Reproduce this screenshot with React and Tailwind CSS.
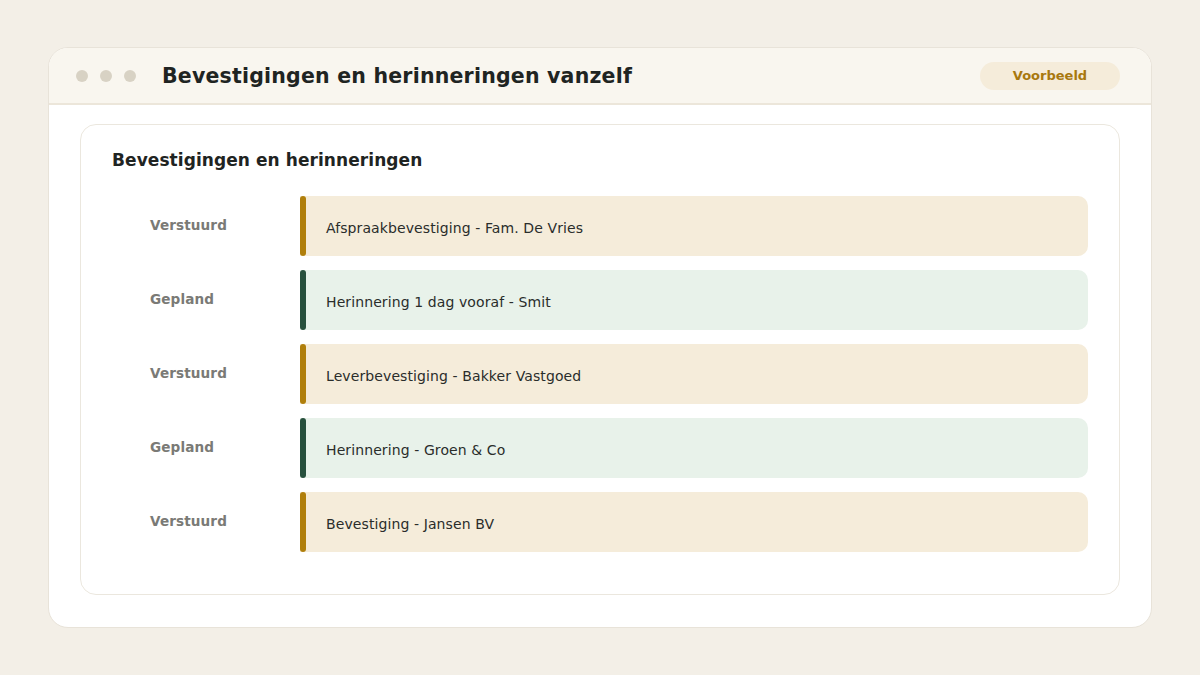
const rows = [
  { status: 'Verstuurd', text: 'Afspraakbevestiging - Fam. De Vries', kind: 'sent' },
  { status: 'Gepland', text: 'Herinnering 1 dag vooraf - Smit', kind: 'planned' },
  { status: 'Verstuurd', text: 'Leverbevestiging - Bakker Vastgoed', kind: 'sent' },
  { status: 'Gepland', text: 'Herinnering - Groen & Co', kind: 'planned' },
  { status: 'Verstuurd', text: 'Bevestiging - Jansen BV', kind: 'sent' },
];

export default function App() {
  return (
    <div
      className="w-[1200px] h-[675px] bg-[#f3efe7] px-12 pt-[47px]"
      style={{ fontFamily: '"DejaVu Sans", sans-serif' }}
    >
      <div className="h-[581px] bg-white border border-[#e8e3d9] rounded-[20px] overflow-hidden flex flex-col">
        {/* Header */}
        <div className="h-[57px] shrink-0 bg-[#f9f6ef] border-b-2 border-[#ece6da] flex items-center pl-[27px] pr-[31px]">
          <div className="flex gap-3">
            <span className="w-3 h-3 rounded-full bg-[#d8d2c4]" />
            <span className="w-3 h-3 rounded-full bg-[#d8d2c4]" />
            <span className="w-3 h-3 rounded-full bg-[#d8d2c4]" />
          </div>
          <h1 className="ml-[26px] pt-[2px] text-[20.5px] font-bold text-[#1f2422] tracking-[0.2px]">
            Bevestigingen en herinneringen vanzelf
          </h1>
          <span className="ml-auto w-[140px] h-7 rounded-full bg-[#f5ecda] text-[#a8780e] text-[13px] font-bold flex items-center justify-center">
            Voorbeeld
          </span>
        </div>

        {/* Body */}
        <div className="px-[31px] pt-[19px]">
          <div className="border border-[#ebe7de] rounded-2xl px-[31px] pt-[25px] pb-[42px]">
            <h2 className="text-[17px] font-bold text-[#1f2422] leading-5 tracking-[0.07px]">
              Bevestigingen en herinneringen
            </h2>
            <div className="mt-[26px] flex flex-col gap-[14px]">
              {rows.map((r, i) => (
                <Row key={i} {...r} />
              ))}
            </div>
          </div>
        </div>
      </div>
    </div>
  );
}

function Row({ status, text, kind }) {
  const sent = kind === 'sent';
  return (
    <div className="flex h-[60px]">
      <div className="w-[188px] shrink-0 pl-[38px] pt-[19px] text-[13.6px] font-bold text-[#7a7a76] leading-[20px] tracking-[0.1px]">
        {status}
      </div>
      <div className={`flex-1 flex rounded-r-[10px] ${sent ? 'bg-[#f5ecda]' : 'bg-[#e8f2ea]'}`}>
        <span className={`w-[6px] rounded-full ${sent ? 'bg-[#b07f0c]' : 'bg-[#27503d]'}`} />
        <span className="pl-5 pt-[23px] text-[14px] text-[#2a2d2b] leading-[18px] tracking-[0.1px]">{text}</span>
      </div>
    </div>
  );
}
